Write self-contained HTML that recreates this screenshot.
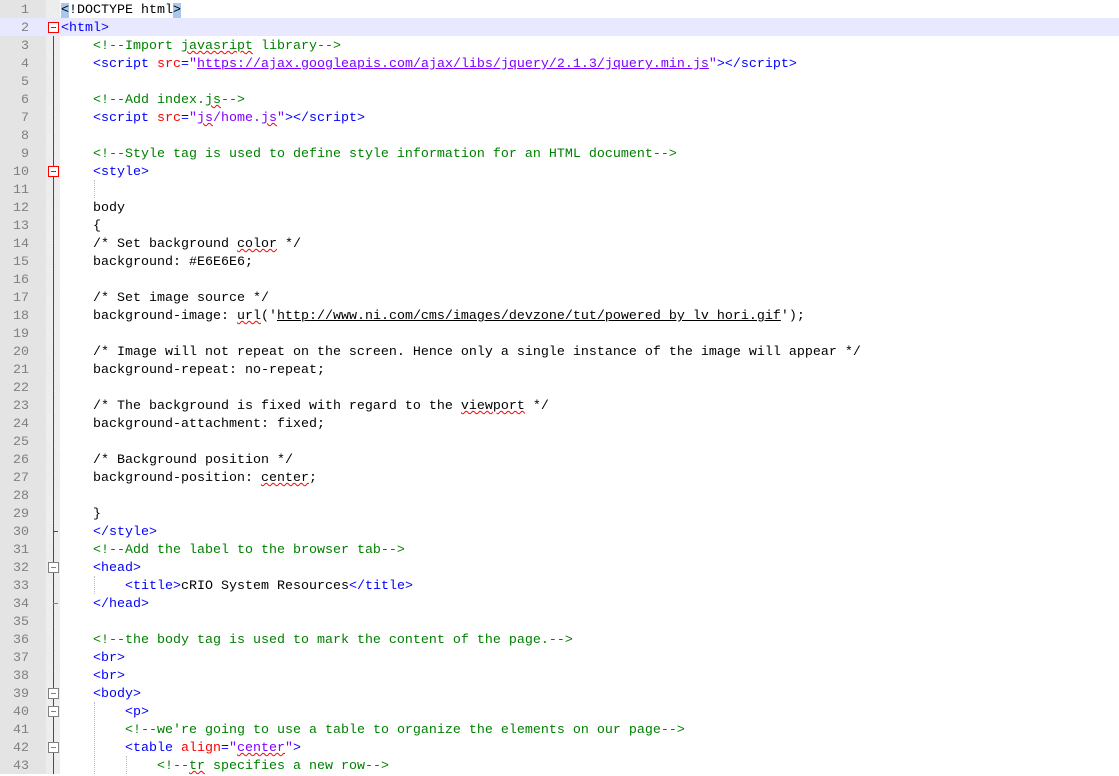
<!DOCTYPE html>
<html><head><style>
body{margin:0;width:1119px;height:774px;overflow:hidden;background:#fff;font-family:"Liberation Mono",monospace;font-size:13.33px;}
.g{position:absolute;left:0;top:0;width:46px;height:774px;background:#e4e4e4;}
.f{position:absolute;left:46px;top:0;width:14px;height:774px;background:#f2f2f2;background-image:repeating-linear-gradient(45deg,#e8e8e8 0 1px,transparent 1px 2px);}
.vl{position:absolute;left:53px;top:30px;width:1px;height:744px;background:#f00;}
.row{position:absolute;left:0;height:18px;width:1119px;line-height:18px;}
.n{position:absolute;left:0;top:2px;width:29px;text-align:right;color:#808080;}
.t{position:absolute;left:61px;top:2px;white-space:pre;color:#000;}
.k{color:#0000ff}.a{color:#ff0000}.v{color:#8000ff}.c{color:#008000}
.u{text-decoration:underline}
.s{text-decoration:underline wavy #f00;text-decoration-thickness:1px}
.bx{position:absolute;left:48px;top:4px;width:11px;height:11px;border:1px solid #808080;background:#fff;box-sizing:border-box;}
.bx::after{content:"";position:absolute;left:2px;top:4px;width:5px;height:1px;background:#808080}
.r{border-color:#f00}.r::after{background:#f00}
.hl{background:#a8c8ec}
.tick{position:absolute;left:53px;top:9px;width:5px;height:1px;background:#808080}
.ig{position:absolute;width:0;border-left:1px dotted #bbb;}
</style></head><body>
<div class="g"></div><div class="f"></div><div class="vl"></div>
<div class="row" style="top:18px;background:#e8e8ff"></div>
<div class="row" style="top:0"><span class="n">1</span><span class="t"><span class="hl">&lt;</span>!DOCTYPE html<span class="hl">&gt;</span></span></div>
<div class="row" style="top:18px"><span class="n">2</span><span class="bx r"></span><span class="t"><span class="k">&lt;html&gt;</span></span></div>
<div class="row" style="top:36px"><span class="n">3</span><span class="t">    <span class="c">&lt;!--Import <span class="s">javasript</span> library--&gt;</span></span></div>
<div class="row" style="top:54px"><span class="n">4</span><span class="t">    <span class="k">&lt;script </span><span class="a">src</span><span class="k">=</span><span class="v">"<span class="u">https://ajax.googleapis.com/ajax/libs/jquery/2.1.3/jquery.min.js</span>"</span><span class="k">&gt;&lt;/script&gt;</span></span></div>
<div class="row" style="top:72px"><span class="n">5</span></div>
<div class="row" style="top:90px"><span class="n">6</span><span class="t">    <span class="c">&lt;!--Add index.<span class="s">js</span>--&gt;</span></span></div>
<div class="row" style="top:108px"><span class="n">7</span><span class="t">    <span class="k">&lt;script </span><span class="a">src</span><span class="k">=</span><span class="v">"<span class="s">js</span>/home.<span class="s">js</span>"</span><span class="k">&gt;&lt;/script&gt;</span></span></div>
<div class="row" style="top:126px"><span class="n">8</span></div>
<div class="row" style="top:144px"><span class="n">9</span><span class="t">    <span class="c">&lt;!--Style tag is used to define style information for an HTML document--&gt;</span></span></div>
<div class="row" style="top:162px"><span class="n">10</span><span class="bx r"></span><span class="t">    <span class="k">&lt;style&gt;</span></span></div>
<div class="row" style="top:180px"><span class="n">11</span></div>
<div class="row" style="top:198px"><span class="n">12</span><span class="t">    body</span></div>
<div class="row" style="top:216px"><span class="n">13</span><span class="t">    {</span></div>
<div class="row" style="top:234px"><span class="n">14</span><span class="t">    /* Set background <span class="s">color</span> */</span></div>
<div class="row" style="top:252px"><span class="n">15</span><span class="t">    background: #E6E6E6;</span></div>
<div class="row" style="top:270px"><span class="n">16</span></div>
<div class="row" style="top:288px"><span class="n">17</span><span class="t">    /* Set image source */</span></div>
<div class="row" style="top:306px"><span class="n">18</span><span class="t">    background-image: <span class="s">url</span>('<span class="u">http://www.ni.com/cms/images/devzone/tut/powered_by_lv_hori.gif</span>');</span></div>
<div class="row" style="top:324px"><span class="n">19</span></div>
<div class="row" style="top:342px"><span class="n">20</span><span class="t">    /* Image will not repeat on the screen. Hence only a single instance of the image will appear */</span></div>
<div class="row" style="top:360px"><span class="n">21</span><span class="t">    background-repeat: no-repeat;</span></div>
<div class="row" style="top:378px"><span class="n">22</span></div>
<div class="row" style="top:396px"><span class="n">23</span><span class="t">    /* The background is fixed with regard to the <span class="s">viewport</span> */</span></div>
<div class="row" style="top:414px"><span class="n">24</span><span class="t">    background-attachment: fixed;</span></div>
<div class="row" style="top:432px"><span class="n">25</span></div>
<div class="row" style="top:450px"><span class="n">26</span><span class="t">    /* Background position */</span></div>
<div class="row" style="top:468px"><span class="n">27</span><span class="t">    background-position: <span class="s">center</span>;</span></div>
<div class="row" style="top:486px"><span class="n">28</span></div>
<div class="row" style="top:504px"><span class="n">29</span><span class="t">    }</span></div>
<div class="row" style="top:522px"><span class="n">30</span><span class="tick" style="background:#f00"></span><span class="t">    <span class="k">&lt;/style&gt;</span></span></div>
<div class="row" style="top:540px"><span class="n">31</span><span class="t">    <span class="c">&lt;!--Add the label to the browser tab--&gt;</span></span></div>
<div class="row" style="top:558px"><span class="n">32</span><span class="bx"></span><span class="t">    <span class="k">&lt;head&gt;</span></span></div>
<div class="row" style="top:576px"><span class="n">33</span><span class="t">        <span class="k">&lt;title&gt;</span>cRIO System Resources<span class="k">&lt;/title&gt;</span></span></div>
<div class="row" style="top:594px"><span class="n">34</span><span class="tick"></span><span class="t">    <span class="k">&lt;/head&gt;</span></span></div>
<div class="row" style="top:612px"><span class="n">35</span></div>
<div class="row" style="top:630px"><span class="n">36</span><span class="t">    <span class="c">&lt;!--the body tag is used to mark the content of the page.--&gt;</span></span></div>
<div class="row" style="top:648px"><span class="n">37</span><span class="t">    <span class="k">&lt;br&gt;</span></span></div>
<div class="row" style="top:666px"><span class="n">38</span><span class="t">    <span class="k">&lt;br&gt;</span></span></div>
<div class="row" style="top:684px"><span class="n">39</span><span class="bx"></span><span class="t">    <span class="k">&lt;body&gt;</span></span></div>
<div class="row" style="top:702px"><span class="n">40</span><span class="bx"></span><span class="t">        <span class="k">&lt;p&gt;</span></span></div>
<div class="row" style="top:720px"><span class="n">41</span><span class="t">        <span class="c">&lt;!--we're going to use a table to organize the elements on our page--&gt;</span></span></div>
<div class="row" style="top:738px"><span class="n">42</span><span class="bx"></span><span class="t">        <span class="k">&lt;table </span><span class="a">align</span><span class="k">=</span><span class="v">"<span class="s">center</span>"</span><span class="k">&gt;</span></span></div>
<div class="row" style="top:756px"><span class="n">43</span><span class="t">            <span class="c">&lt;!--<span class="s">tr</span> specifies a new row--&gt;</span></span></div>
<div class="ig" style="left:94px;top:576px;height:18px"></div>
<div class="ig" style="left:94px;top:702px;height:72px"></div>
<div class="ig" style="left:126px;top:756px;height:18px"></div>
<div class="ig" style="left:94px;top:180px;height:18px"></div>
</body></html>
